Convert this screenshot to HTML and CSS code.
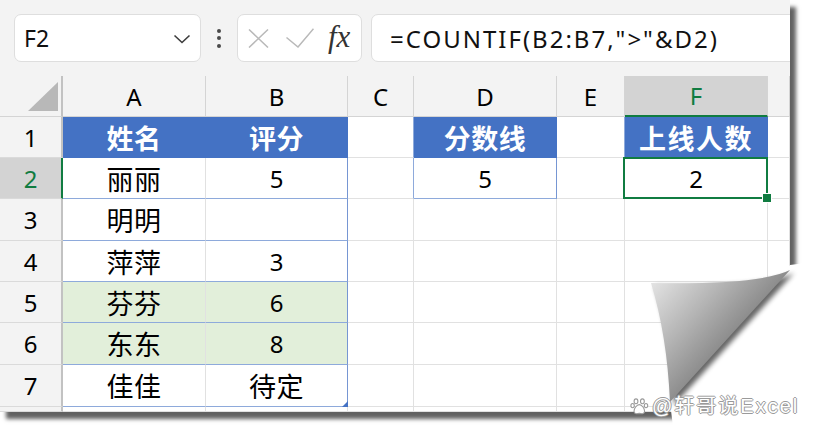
FILE: index.html
```html
<!DOCTYPE html>
<html lang="zh">
<head>
<meta charset="utf-8">
<title>COUNTIF</title>
<link rel="stylesheet" href="styles.css">
</head>
<body>
<div class="page">
  <div class="toolbar">
    <div class="namebox">
      <span class="ref">F2</span>
      <svg class="chev" width="18" height="10" viewBox="0 0 18 10"><path d="M1.5 1.5 L9 8.5 L16.5 1.5" fill="none" stroke="#3c3c3c" stroke-width="1.6"/></svg>
    </div>
    <div class="dots"><i></i><i></i><i></i></div>
    <div class="fxbox">
      <svg class="ico-x" width="21" height="19" viewBox="0 0 21 19"><path d="M1 0.5 L20 18.5 M20 0.5 L1 18.5" stroke="#b9b9b9" stroke-width="1.5" fill="none"/></svg>
      <svg class="ico-ok" width="28" height="20" viewBox="0 0 28 20"><path d="M0.5 9.5 L12 19 L27.5 0.8" stroke="#b9b9b9" stroke-width="1.5" fill="none"/></svg>
      <span class="fx">fx</span>
    </div>
    <div class="formula">=COUNTIF(B2:B7,"&gt;"&amp;D2)</div>
  </div>
  <div class="sheet">
    <div class="ch corner"><svg width="61" height="40" viewBox="0 0 61 40"><polygon points="28,35 58,6 58,35" fill="#b8b8b8"/></svg></div>
    <div class="ch">A</div>
    <div class="ch">B</div>
    <div class="ch">C</div>
    <div class="ch">D</div>
    <div class="ch">E</div>
    <div class="ch selcol">F</div>
    <div class="ch"></div>

    <div class="rh">1</div>
    <div class="c th zh">姓名</div>
    <div class="c th zh">评分</div>
    <div class="c bluer"></div>
    <div class="c th zh">分数线</div>
    <div class="c bluer"></div>
    <div class="c th zh wide">上线人数</div>
    <div class="c"></div>

    <div class="rh selrow">2</div>
    <div class="c tb zh">丽丽</div>
    <div class="c tb tr">5</div>
    <div class="c bluer"></div>
    <div class="c tb tr">5</div>
    <div class="c"></div>
    <div class="c active">2</div>
    <div class="c"></div>

    <div class="rh">3</div>
    <div class="c tb zh">明明</div>
    <div class="c tb tr"></div>
    <div class="c"></div>
    <div class="c"></div>
    <div class="c"></div>
    <div class="c"></div>
    <div class="c"></div>

    <div class="rh">4</div>
    <div class="c tb zh">萍萍</div>
    <div class="c tb tr">3</div>
    <div class="c"></div>
    <div class="c"></div>
    <div class="c"></div>
    <div class="c"></div>
    <div class="c"></div>

    <div class="rh">5</div>
    <div class="c tb green zh">芬芬</div>
    <div class="c tb tr green">6</div>
    <div class="c"></div>
    <div class="c"></div>
    <div class="c"></div>
    <div class="c"></div>
    <div class="c"></div>

    <div class="rh">6</div>
    <div class="c tb green zh">东东</div>
    <div class="c tb tr green">8</div>
    <div class="c"></div>
    <div class="c"></div>
    <div class="c"></div>
    <div class="c"></div>
    <div class="c"></div>

    <div class="rh">7</div>
    <div class="c tb zh">佳佳</div>
    <div class="c tb tr zh handle">待定</div>
    <div class="c"></div>
    <div class="c"></div>
    <div class="c"></div>
    <div class="c"></div>
    <div class="c"></div>

    <div class="rh"></div>
    <div class="c"></div>
    <div class="c"></div>
    <div class="c"></div>
    <div class="c"></div>
    <div class="c"></div>
    <div class="c"></div>
    <div class="c"></div>
  </div>
</div>

<svg class="curl" width="813" height="435" viewBox="0 0 813 435">
  <defs>
    <linearGradient id="curlfill" gradientUnits="userSpaceOnUse" x1="652" y1="284" x2="722" y2="347">
      <stop offset="0" stop-color="#e2e2e2"/>
      <stop offset="0.55" stop-color="#b4b4b4"/>
      <stop offset="1" stop-color="#8c8c8c"/>
    </linearGradient>
    <filter id="soft" x="-20%" y="-20%" width="140%" height="140%"><feGaussianBlur stdDeviation="2.4"/></filter>
  </defs>
  <path d="M790,265 L813,262 L813,435 L674,435 L670,402 Z" fill="#ffffff"/>
  <path d="M651,283 Q760,285 790,270 L670,402 Q667,335 651,283 Z" fill="#000" opacity="0.6" transform="translate(4,3)" filter="url(#soft)"/>
  <path d="M651,283 Q760,285 790,270 L670,402 Q667,335 651,283 Z" fill="url(#curlfill)"/>
</svg>

<div class="watermark">
  <svg class="paw" width="19" height="17" viewBox="0 0 19 17">
    <g fill="#fff" stroke="#9a9a9a" stroke-width="1.1">
      <ellipse cx="6" cy="3.3" rx="1.9" ry="2.4"/>
      <ellipse cx="12.4" cy="3.3" rx="1.9" ry="2.4"/>
      <ellipse cx="2.6" cy="7.6" rx="1.7" ry="2.1"/>
      <ellipse cx="16" cy="7.6" rx="1.7" ry="2.1"/>
      <path d="M9.3 6.6 C6.7 6.6 3.8 10.8 4 13.4 C4.3 16.3 7 15.9 9.3 15.4 C11.6 15.9 14.3 16.3 14.6 13.4 C14.8 10.8 11.9 6.6 9.3 6.6 Z"/>
    </g>
  </svg>
  <span class="wm-text">@轩哥说Excel</span>
</div>
</body>
</html>
```

FILE: styles.css
```css
* { box-sizing: border-box; }

html, body {
  margin: 0;
  padding: 0;
}

body {
  width: 813px;
  height: 435px;
  overflow: hidden;
  background: #ffffff;
  font-family: "Noto Sans", "Noto Sans CJK SC", sans-serif;
  position: relative;
}

.page {
  width: 790px;
  height: 412px;
  background: #f3f3f3;
  box-shadow: 6px 7px 4px rgba(0, 0, 0, 0.62);
  display: flex;
  flex-direction: column;
  overflow: hidden;
}

/* ---------- formula bar ---------- */
.toolbar {
  height: 76px;
  flex: 0 0 76px;
  display: flex;
  align-items: flex-start;
  padding: 14px 0 0 14px;
}

.namebox {
  width: 187px;
  height: 48px;
  background: #fff;
  border: 1px solid #dedede;
  border-radius: 7px;
  display: flex;
  align-items: center;
  justify-content: space-between;
  padding: 0 9px 0 9px;
}

.ref {
  font-size: 23px;
  color: #111;
}

.chev { margin-top: 2px; }

.dots {
  width: 36px;
  height: 48px;
  display: flex;
  flex-direction: column;
  align-items: center;
  justify-content: center;
  gap: 3.5px;
}

.dots i {
  width: 4px;
  height: 4px;
  border-radius: 50%;
  background: #4a4a4a;
  display: block;
}

.fxbox {
  width: 125px;
  height: 48px;
  background: #fff;
  border: 1px solid #dedede;
  border-radius: 7px;
  display: flex;
  align-items: center;
  padding-left: 10px;
}

.ico-x { margin-right: 17px; margin-top: 1px; }
.ico-ok { margin-right: 14px; margin-top: -1px; }

.fx {
  font-family: "Liberation Serif", "DejaVu Serif", serif;
  font-style: italic;
  font-size: 31px;
  color: #333;
  line-height: 1;
  margin-top: -3px;
}

.formula {
  flex: 1;
  height: 48px;
  margin-left: 9px;
  margin-right: -10px;
  background: #fff;
  border: 1px solid #dedede;
  border-radius: 7px 0 0 7px;
  display: flex;
  align-items: center;
  padding-left: 18px;
  font-size: 24px;
  letter-spacing: 2px;
  color: #111;
  white-space: nowrap;
}

/* ---------- grid ---------- */
.sheet {
  flex: 1;
  display: grid;
  grid-template-columns: 63px 143px 142px 66px 143px 68px 143px 22px;
  grid-template-rows: 41px 41px 41px 42px 41px 41px 42px 42px 1fr;
  font-size: 24px;
  color: #000;
}

.ch {
  background: #f3f3f3;
  border-right: 1px solid #d4d4d4;
  border-bottom: 1px solid #d4d4d4;
  display: flex;
  align-items: center;
  justify-content: center;
}

.corner {
  border-right: 2px solid #c2c2c2;
  align-items: flex-start;
  justify-content: flex-start;
}

.selcol {
  background: #d3d3d3;
  color: #107c41;
  border-bottom: 2px solid #107c41;
}

.rh {
  background: #f3f3f3;
  border-right: 2px solid #c2c2c2;
  border-bottom: 1px solid #dadada;
  display: flex;
  align-items: center;
  justify-content: center;
}

.selrow {
  background: #d3d3d3;
  color: #107c41;
  border-right-color: #107c41;
}

.c {
  background: #fff;
  border-right: 1px solid #e1e1e1;
  border-bottom: 1px solid #e1e1e1;
  display: flex;
  align-items: center;
  justify-content: center;
  position: relative;
}

.zh {
  font-size: 27px;
  letter-spacing: 0.5px;
}

.wide { letter-spacing: 1.5px; }

.th {
  background: #4472c4;
  color: #fff;
  font-weight: 700;
  border-right-color: #4472c4;
  border-bottom-color: #4472c4;
}

.tb { border-bottom-color: #8eaadb; }
.tr { border-right-color: #7696d3; }
.bluer { border-right-color: #8eaadb; }

.green { background: #e2efda; }

.active { z-index: 2; }

.active::before {
  content: "";
  position: absolute;
  left: -2px;
  top: -1px;
  right: -1px;
  bottom: -1px;
  border: 2px solid #107c41;
}

.active::after {
  content: "";
  position: absolute;
  right: -5px;
  bottom: -5px;
  width: 8px;
  height: 8px;
  background: #107c41;
  border: 1px solid #fff;
}

.handle { z-index: 1; }

.handle::after {
  content: "";
  position: absolute;
  right: -1px;
  bottom: -1px;
  width: 6px;
  height: 6px;
  background: #4472c4;
  clip-path: polygon(100% 0, 100% 100%, 0 100%);
}

/* ---------- page curl & watermark ---------- */
.curl {
  position: absolute;
  left: 0;
  top: 0;
  pointer-events: none;
}

.watermark {
  position: absolute;
  left: 630px;
  top: 395px;
  display: flex;
  align-items: center;
  gap: 3px;
}

.wm-text {
  font-family: "Liberation Sans", "Noto Sans CJK SC", sans-serif;
  font-size: 20px;
  line-height: 22px;
  letter-spacing: 2px;
  color: #ffffff;
  text-shadow: 1px 0 0 #9a9a9a, -1px 0 0 #9a9a9a, 0 1px 0 #9a9a9a, 0 -1px 0 #9a9a9a;
}
```
